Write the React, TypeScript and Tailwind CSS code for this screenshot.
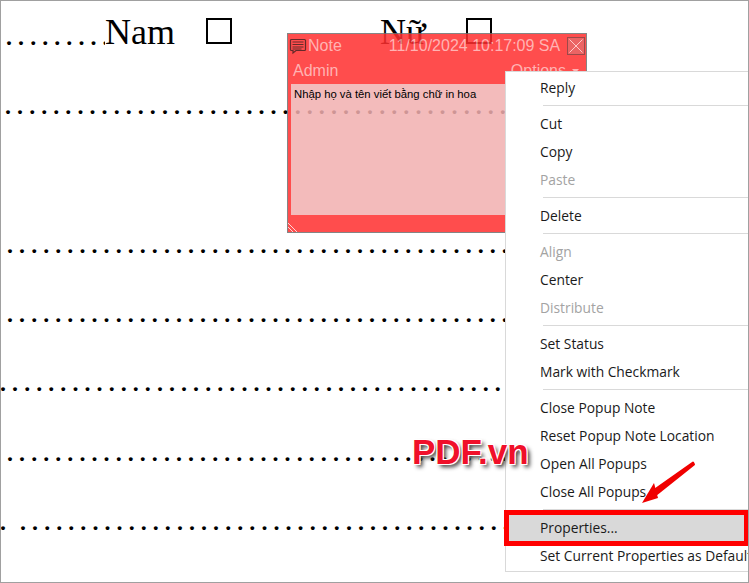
const DOTS = ".".repeat(70);

function DotRow({ indent, height, lead }: { indent: string; height: string; lead?: boolean }) {
  return (
    <div className={`flex ${height} ${indent} overflow-hidden whitespace-nowrap font-['Liberation_Serif',serif] text-[24px] font-bold leading-none tracking-[6.07px] text-black`}>
      {lead ? <span className="w-[20px] shrink-0">.</span> : null}
      <span>{DOTS}</span>
    </div>
  );
}

function Sep() {
  return (
    <div className="h-2 pl-[37px] pt-[3px]">
      <div className="h-px bg-[#d9d9d9]" />
    </div>
  );
}

function Item({ label, disabled, active }: { label: string; disabled?: boolean; active?: boolean }) {
  return (
    <div className={`flex h-7 items-center whitespace-nowrap pl-[34px] ${disabled ? "text-[#a3a3a3]" : "text-[#1a1a1a]"} ${active ? "bg-[#d9d9d9]" : ""}`}>
      {label}
    </div>
  );
}

export default function App() {
  return (
    <div className="relative h-[583px] w-[749px] overflow-hidden border border-[#a0a0a0] bg-white">
      <div className="flex h-[60px] items-start font-['Liberation_Serif',serif] text-[36px] leading-none text-black">
        <div className="mt-[13px] flex items-start pl-[5px]">
          <span className="mt-[11px] w-[99px] overflow-hidden whitespace-nowrap text-[24px] font-bold leading-none tracking-[6.07px]">..........</span>
          <span>Nam</span>
          <span className="ml-[31px] mt-[4px] h-[26px] w-[26px] border-2 border-black" />
          <span className="ml-[148px]">Nữ</span>
          <span className="ml-[40px] mt-[4px] h-[26px] w-[26px] border-2 border-black" />
        </div>
      </div>
      <div className="mt-[33px]">
        <DotRow indent="pl-[4px]" height="h-[139px]" />
        <DotRow indent="pl-[6px]" height="h-[69px]" />
        <DotRow indent="pl-[6px]" height="h-[69px]" />
        <DotRow indent="-ml-px" height="h-[70px]" />
        <DotRow indent="pl-[6px]" height="h-[69px]" />
        <DotRow indent="-ml-px" height="h-[24px]" lead />
      </div>

      {/* Popup note */}
      <div className="absolute left-[286px] top-[32px] flex h-[200px] w-[300px] flex-col border border-[#707070] bg-[#ff2e2e] font-['Liberation_Sans',sans-serif] text-[16px] text-[#ffa6a6] opacity-85">
        <div className="flex h-[23px] items-center pl-[1px]">
          <svg width="18" height="18" viewBox="0 0 18 18" fill="none" stroke="#4a0505" strokeWidth="1.2">
            <path d="M2.5 2.5h13a1 1 0 0 1 1 1v9a1 1 0 0 1-1 1H7l-3 2.5v-2.5H2.5a1 1 0 0 1-1-1v-9a1 1 0 0 1 1-1z" />
            <path d="M3.5 5h11M3.5 7.5h11M3.5 10h11M3.5 12h9" />
          </svg>
          <span className="ml-[1px]">Note</span>
          <span className="ml-[47px]">11/10/2024 10:17:09 SA</span>
          <span className="ml-auto mr-[1px] flex h-[18px] w-[18px] items-center justify-center border border-[#8a2a2a] bg-[#e84a4a]">
            <svg width="16" height="16" viewBox="0 0 16 16" stroke="#ffc0c0" strokeWidth="1">
              <path d="M1.5 1.5l13 13M14.5 1.5l-13 13" />
            </svg>
          </span>
        </div>
        <div className="flex h-[27px] items-center justify-between pl-[5px] pr-[7px]">
          <span>Admin</span>
          <span className="flex items-center gap-[6px]">
            Options
            <svg width="7" height="4" viewBox="0 0 7 4" fill="#ffa6a6">
              <path d="M0 0h7L3.5 4z" />
            </svg>
          </span>
        </div>
        <div className="mx-[3px] h-[131px] bg-[#f2b0b0]" />
        <svg className="absolute bottom-0 left-0" width="10" height="10" viewBox="0 0 10 10" stroke="#ffd0d0" strokeWidth="1">
          <path d="M0 1l9 9M0 5l5 5" />
        </svg>
      </div>
      <div className="absolute left-[293px] top-[85px] font-['Liberation_Sans',sans-serif] text-[11.3px] text-black">
        Nhập họ và tên viết bằng chữ in hoa
      </div>

      {/* Context menu */}
      <div className="absolute left-[504px] top-[70px] w-[260px] border border-[#d9d9d9] bg-white pt-[2px] pb-[1px] font-['Open_Sans',sans-serif] text-[13.8px]">
        <Item label="Reply" />
        <Sep />
        <Item label="Cut" />
        <Item label="Copy" />
        <Item label="Paste" disabled />
        <Sep />
        <Item label="Delete" />
        <Sep />
        <Item label="Align" disabled />
        <Item label="Center" />
        <Item label="Distribute" disabled />
        <Sep />
        <Item label="Set Status" />
        <Item label="Mark with Checkmark" />
        <Sep />
        <Item label="Close Popup Note" />
        <Item label="Reset Popup Note Location" />
        <Item label="Open All Popups" />
        <Item label="Close All Popups" />
        <Sep />
        <Item label="Properties..." active />
        <Item label="Set Current Properties as Default" />
      </div>

      {/* Annotations */}
      <div className="absolute left-[503px] top-[509px] h-[36px] w-[245px] border-[5px] border-[#ff0000]" />
      <div className="absolute left-[411px] top-[433px] font-['Liberation_Sans',sans-serif] text-[35px] font-bold leading-none text-[#f0102a] [text-shadow:-1px_-1px_0_#fff,1px_-1px_0_#fff,-1px_1px_0_#fff,1px_1px_0_#fff,3px_3px_4px_#333]">
        PDF.vn
      </div>
      <svg className="absolute left-[636px] top-[456px]" width="62" height="50" viewBox="0 0 62 50" fill="none">
        <path d="M56 5.5L57 7.5L20 37L17 33Z" fill="#f00000" stroke="#f00000" strokeWidth="2" strokeLinejoin="round" />
        <path d="M5 46L17 26L21 41Z" fill="#f00000" />
      </svg>
    </div>
  );
}
